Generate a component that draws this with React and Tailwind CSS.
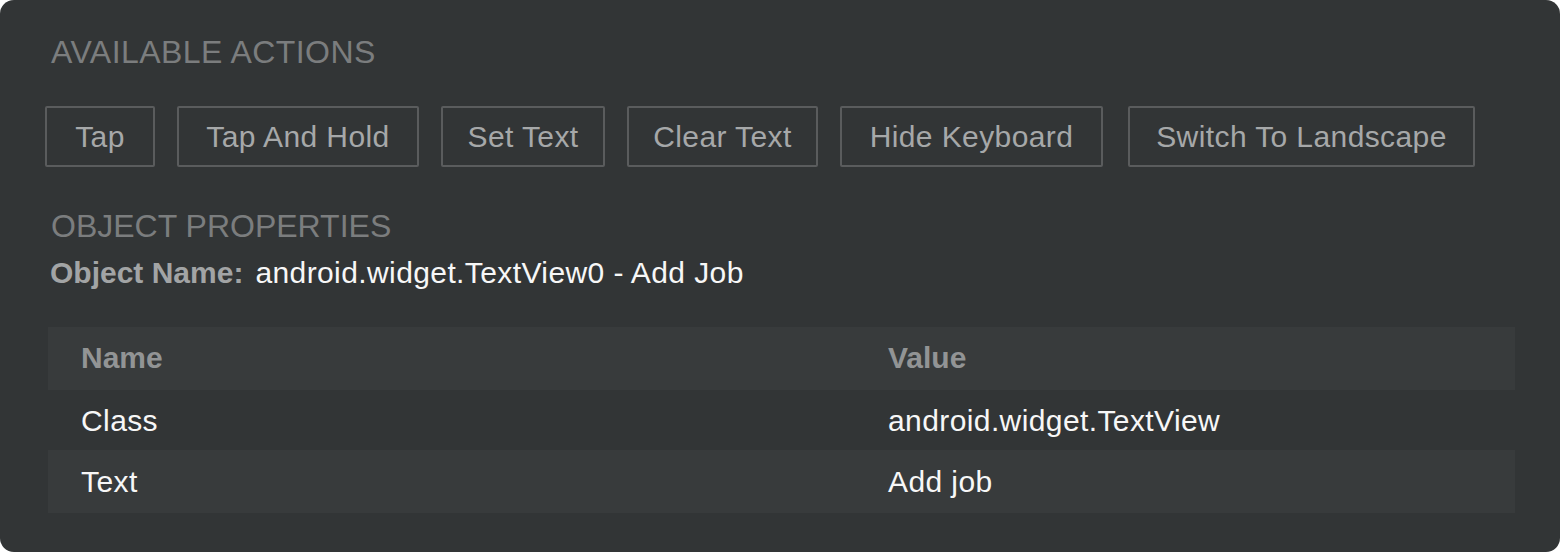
import React from "react";

const actions = [
  { label: "Tap", width: "w-[110px]" },
  { label: "Tap And Hold", width: "w-[242px]" },
  { label: "Set Text", width: "w-[164px]" },
  { label: "Clear Text", width: "w-[191px]" },
  { label: "Hide Keyboard", width: "w-[263px]" },
  { label: "Switch To Landscape", width: "w-[347px] ml-[3px]" },
];

const rows = [
  { name: "Class", value: "android.widget.TextView", shade: "bg-[#323536]" },
  { name: "Text", value: "Add job", shade: "bg-[#383b3c]" },
];

const App = () => {
  return (
    <div className="w-[1560px] h-[552px] bg-white font-['Liberation_Sans',Arial,sans-serif]">
      <div className="h-full rounded-[14px] bg-[#323536] px-[48px] pt-[34px]">
        <h2 className="ml-[3px] text-[32px] leading-[36px] tracking-[0.45px] text-[#7b7d7e]">
          AVAILABLE ACTIONS
        </h2>

        <div className="mt-[36px] -ml-[3px] flex gap-[22px]">
          {actions.map((a) => (
            <button
              key={a.label}
              className={`${a.width} h-[61px] rounded-[2px] border-2 border-[#5a5c5d] text-[30px] leading-none tracking-[0.4px] text-[#a6a8a9]`}
            >
              {a.label}
            </button>
          ))}
        </div>

        <h2 className="mt-[41px] ml-[3px] text-[32px] leading-[36px] text-[#7b7d7e]">
          OBJECT PROPERTIES
        </h2>

        <div className="mt-[12px] ml-[2px] flex text-[30px] leading-[34px]">
          <span className="font-bold text-[#a2a4a5]">Object Name:</span>
          <span className="ml-[12px] tracking-[0.4px] text-[#f7f7f7]">
            android.widget.TextView0 - Add Job
          </span>
        </div>

        <div className="mt-[37px] w-[1467px] text-[30px]">
          <div className="flex h-[63px] items-center bg-[#383b3c] pb-[3px] font-bold text-[#929495]">
            <div className="w-[807px] pl-[33px]">Name</div>
            <div className="pl-[33px]">Value</div>
          </div>
          {rows.map((r, i) => (
            <div
              key={r.name}
              className={`flex ${i === 0 ? "h-[60px]" : "h-[63px]"} items-center ${r.shade} tracking-[0.4px] text-[#f7f7f7]`}
            >
              <div className="w-[807px] pl-[33px]">{r.name}</div>
              <div className="pl-[33px]">{r.value}</div>
            </div>
          ))}
        </div>
      </div>
    </div>
  );
};

export default App;
